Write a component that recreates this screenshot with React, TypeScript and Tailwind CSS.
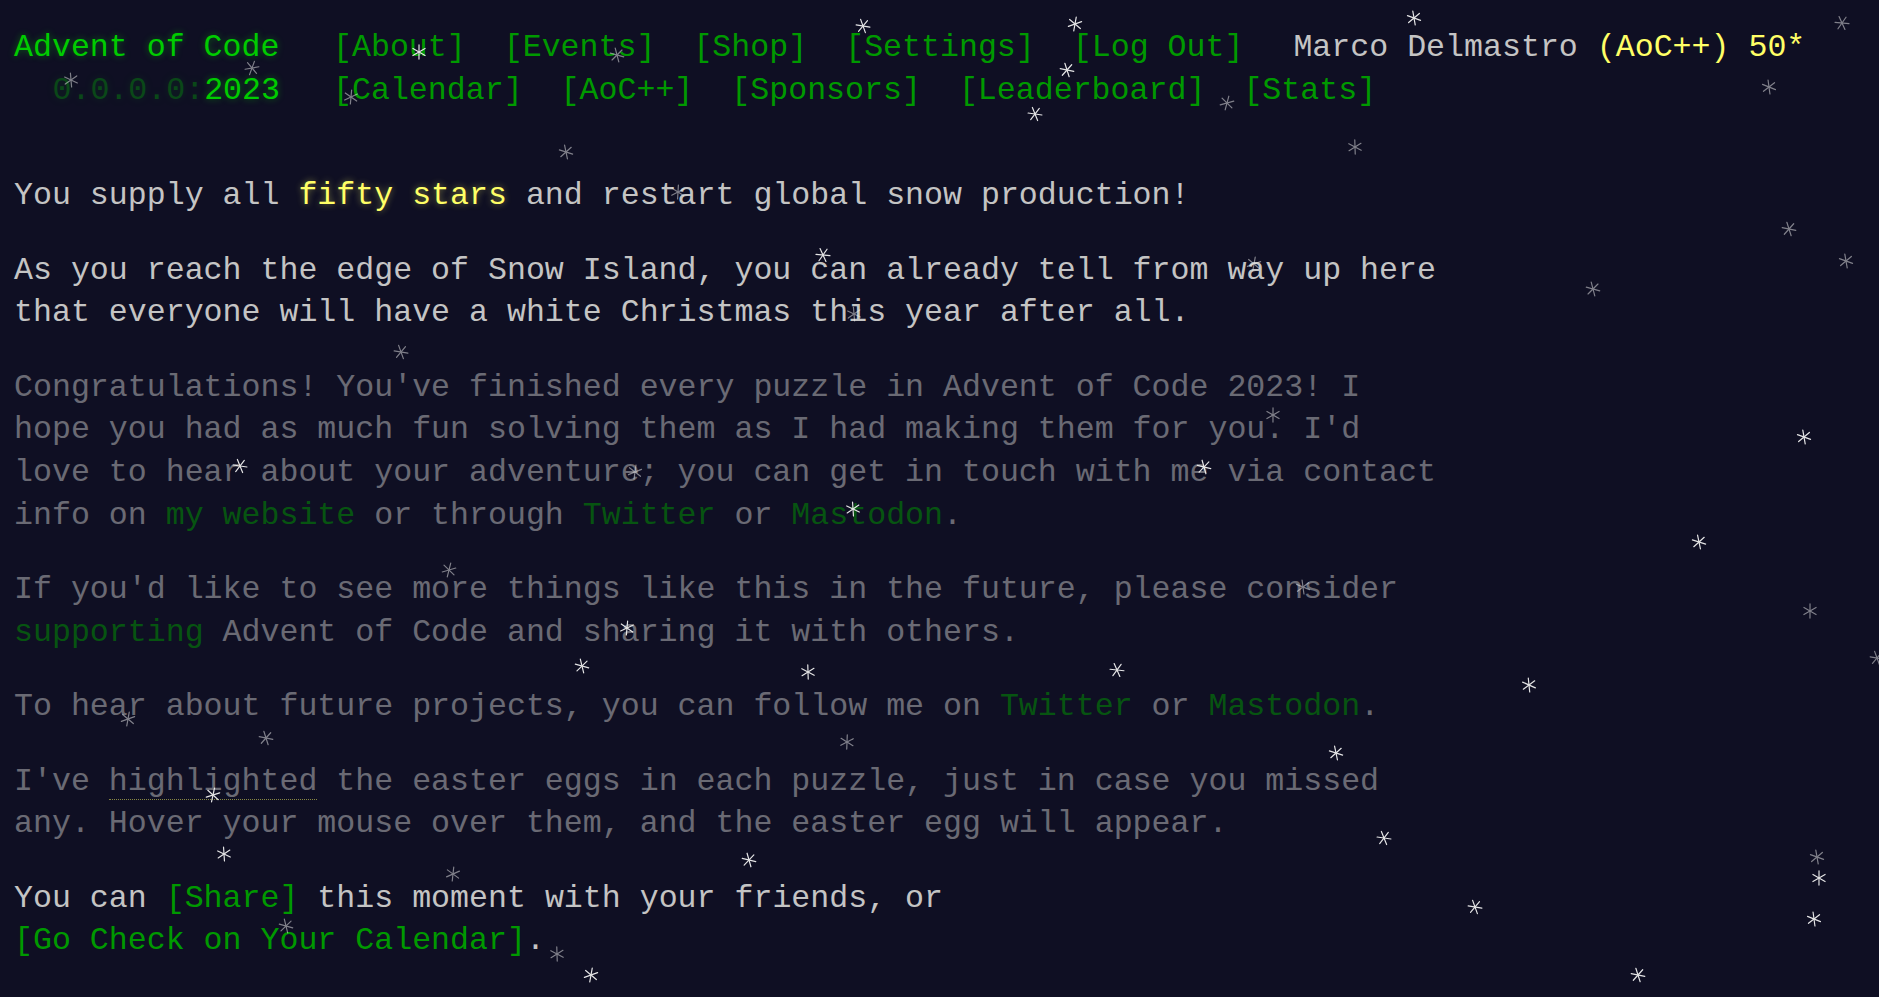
import React from 'react';

// snowflake positions (page coords), b = bright
const flakes: [number, number, number, number][] = [
  [863, 26, 1, 10], [1075, 24, 1, 40], [1414, 18, 1, 20], [1842, 23, 0, 5],
  [419, 52, 1, 30], [617, 55, 0, 15], [252, 68, 0, 50], [71, 80, 0, 25],
  [1067, 70, 1, 12], [351, 97, 0, 35], [1035, 114, 1, 8], [1227, 103, 0, 45],
  [1769, 87, 0, 22], [566, 152, 0, 18], [1355, 147, 0, 28], [678, 192, 0, 33],
  [1789, 229, 0, 12], [1846, 261, 0, 20], [823, 255, 1, 5], [1254, 264, 0, 40],
  [1593, 289, 0, 15], [854, 314, 0, 25], [401, 352, 0, 10], [1273, 415, 0, 30],
  [1804, 437, 1, 20], [240, 466, 1, 8], [635, 472, 0, 38], [1204, 467, 1, 14],
  [853, 509, 1, 26], [1699, 542, 1, 18], [449, 570, 0, 44], [1303, 587, 0, 22],
  [1810, 611, 0, 30], [1877, 658, 0, 10], [627, 628, 1, 35], [582, 666, 1, 16],
  [808, 672, 1, 28], [1117, 670, 1, 6], [1529, 685, 1, 24], [128, 719, 0, 40],
  [266, 738, 0, 12], [847, 742, 0, 32], [1336, 753, 1, 18], [213, 795, 1, 42],
  [1384, 838, 1, 8], [224, 854, 1, 26], [749, 860, 1, 14], [453, 874, 0, 36],
  [1817, 857, 0, 20], [1819, 878, 1, 30], [1475, 907, 1, 10], [1814, 919, 1, 22],
  [286, 926, 0, 16], [557, 954, 0, 28], [591, 975, 1, 40], [1638, 975, 1, 12],
];

const Flake = ({ x, y, bright, rot }: { x: number; y: number; bright: boolean; rot: number }) => (
  <svg
    className="absolute pointer-events-none"
    width="16"
    height="16"
    viewBox="-8 -8 16 16"
    style={{ left: x - 8, top: y - 8, transform: `rotate(${rot}deg)`, opacity: bright ? 0.95 : 0.5 }}
  >
    <g stroke="#f0f0f0" strokeWidth="1.2" strokeLinecap="round">
      <line x1="-7" y1="0" x2="7" y2="0" />
      <line x1="-3.5" y1="-6.1" x2="3.5" y2="6.1" />
      <line x1="3.5" y1="-6.1" x2="-3.5" y2="6.1" />
    </g>
  </svg>
);

const Link = ({ children }: { children: React.ReactNode }) => (
  <a className="text-[#009900] no-underline">{children}</a>
);

const App: React.FC = () => {
  const navTop = ['[About]', '[Events]', '[Shop]', '[Settings]', '[Log Out]'];
  const navBottom = ['[Calendar]', '[AoC++]', '[Sponsors]', '[Leaderboard]', '[Stats]'];

  return (
    <div className="relative min-h-screen w-full overflow-hidden bg-[#0f0f23] text-[#c4c4c4] font-['Liberation_Mono',monospace] text-[31.6px] leading-[42.6px] pl-[14px] pt-[27px]">
      {/* header */}
      <header className="flex flex-col">
        <div className="flex whitespace-pre">
          <h1 className="w-[266px] mr-[53px] font-normal text-[#00cc00] [text-shadow:0_0_7px_rgba(0,204,0,0.45)]">Advent of Code</h1>
          <nav className="flex gap-[38px]">
            {navTop.map((n) => (
              <Link key={n}>{n}</Link>
            ))}
          </nav>
          <div className="ml-[50px]">
            Marco Delmastro <span className="text-[#ffff66]">(AoC++)</span> <span className="text-[#ffff66]">50*</span>
          </div>
        </div>
        <div className="flex whitespace-pre">
          <div className="w-[266px] mr-[53px] text-right text-[#00cc00] [text-shadow:0_0_7px_rgba(0,204,0,0.45)]">
            <span className="opacity-[0.3]">0.0.0.0:</span>2023
          </div>
          <nav className="flex gap-[38px]">
            {navBottom.map((n) => (
              <Link key={n}>{n}</Link>
            ))}
          </nav>
        </div>
      </header>

      {/* final day text */}
      <main className="w-[1430px] mt-[63px] flex flex-col gap-[31.9px]">
        <p>
          You supply all <span className="text-[#ffff66] [text-shadow:0_0_7px_rgba(255,255,102,0.45)]">fifty stars</span> and restart global snow production!
        </p>
        <p>
          As you reach the edge of Snow Island, you can already tell from way up here that everyone will have a white Christmas this year after all.
        </p>
        <div className="opacity-50 flex flex-col gap-[31.9px]">
          <p>
            Congratulations! You've finished every puzzle in Advent of Code 2023! I hope you had as much fun solving them as I had making them for you. I'd love to hear about your adventure; you can get in touch with me via contact info on <Link>my website</Link> or through <Link>Twitter</Link> or <Link>Mastodon</Link>.
          </p>
          <p>
            If you'd like to see more things like this in the future, please consider <Link>supporting</Link> Advent of Code and sharing it with others.
          </p>
          <p>
            To hear about future projects, you can follow me on <Link>Twitter</Link> or <Link>Mastodon</Link>.
          </p>
          <p>
            I've <span className="border-b border-dotted border-[#ffff66]">highlighted</span> the easter eggs in each puzzle, just in case you missed any. Hover your mouse over them, and the easter egg will appear.
          </p>
        </div>
        <p>
          You can <Link>[Share]</Link> this moment with your friends, or{' '}
          <span className="whitespace-nowrap">
            <Link>[Go Check on Your Calendar]</Link>.
          </span>
        </p>
      </main>

      {flakes.map(([x, y, b, r], i) => (
        <Flake key={i} x={x} y={y} bright={b === 1} rot={r} />
      ))}
    </div>
  );
};

export default App;
